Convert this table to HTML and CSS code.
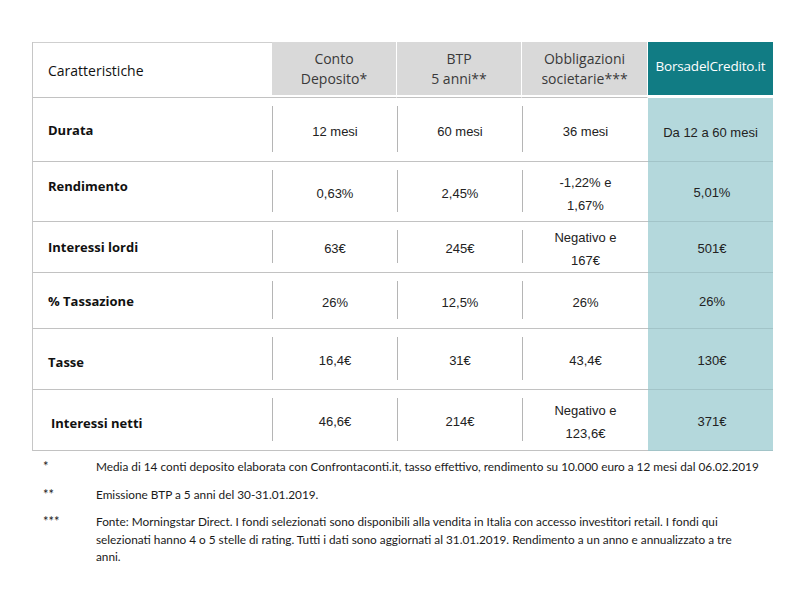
FILE: index.html
```html
<!DOCTYPE html>
<html lang="it">
<head>
<meta charset="utf-8">
<title>Confronto</title>
<link rel="stylesheet" href="styles.css">
</head>
<body>
<div class="page">
  <div class="table">
    <div class="row head">
      <div class="hcell hlabel">Caratteristiche</div>
      <div class="hcell hgray">Conto<br>Deposito*</div>
      <div class="hcell hgray">BTP<br>5 anni**</div>
      <div class="hcell hgray">Obbligazioni<br>societarie***</div>
      <div class="hteal">BorsadelCredito.it</div>
    </div>
    <div class="row r1">
      <div class="lab">Durata</div>
      <div class="cell"><div class="v">12 mesi</div></div>
      <div class="cell"><div class="v">60 mesi</div></div>
      <div class="cell"><div class="v">36 mesi</div></div>
      <div class="tcell up3">Da 12 a 60 mesi</div>
    </div>
    <div class="row r2">
      <div class="lab up">Rendimento</div>
      <div class="cell"><div class="v">0,63%</div></div>
      <div class="cell"><div class="v">2,45%</div></div>
      <div class="cell"><div class="v two">-1,22% e<br>1,67%</div></div>
      <div class="tcell">5,01%</div>
    </div>
    <div class="row r3">
      <div class="lab">Interessi lordi</div>
      <div class="cell"><div class="v">63€</div></div>
      <div class="cell"><div class="v">245€</div></div>
      <div class="cell"><div class="v two">Negativo e<br>167€</div></div>
      <div class="tcell">501€</div>
    </div>
    <div class="row r4">
      <div class="lab">% Tassazione</div>
      <div class="cell"><div class="v">26%</div></div>
      <div class="cell"><div class="v">12,5%</div></div>
      <div class="cell"><div class="v">26%</div></div>
      <div class="tcell">26%</div>
    </div>
    <div class="row r5">
      <div class="lab down">Tasse</div>
      <div class="cell"><div class="v">16,4€</div></div>
      <div class="cell"><div class="v">31€</div></div>
      <div class="cell"><div class="v">43,4€</div></div>
      <div class="tcell">130€</div>
    </div>
    <div class="row r6">
      <div class="lab down in">Interessi netti</div>
      <div class="cell"><div class="v">46,6€</div></div>
      <div class="cell"><div class="v">214€</div></div>
      <div class="cell"><div class="v two">Negativo e<br>123,6€</div></div>
      <div class="tcell">371€</div>
    </div>
  </div>
  <div class="notes">
    <div class="note"><span class="mark">*</span><p>Media di 14 conti deposito elaborata con Confrontaconti.it, tasso effettivo, rendimento su 10.000 euro a 12 mesi dal 06.02.2019</p></div>
    <div class="note"><span class="mark">**</span><p>Emissione BTP a 5 anni del 30-31.01.2019.</p></div>
    <div class="note"><span class="mark">***</span><p>Fonte: Morningstar Direct. I fondi selezionati sono disponibili alla vendita in Italia con accesso investitori retail. I fondi qui<br>selezionati hanno 4 o 5 stelle di rating. Tutti i dati sono aggiornati al 31.01.2019. Rendimento a un anno e annualizzato a tre<br>anni.</p></div>
  </div>
</div>
</body>
</html>
```
FILE: styles.css
```css
* { box-sizing: border-box; }
html, body { margin: 0; padding: 0; background: #fff; }
body { font-family: "Liberation Sans", Arial, sans-serif; color: #222; }

.page { padding: 42px 0 0 32px; }

.table {
  width: 741px;
  border-left: 1px solid #c6c6c6;
}

.row {
  display: grid;
  grid-template-columns: 239px 125px 125px 126px 125px;
  grid-template-rows: 100%;
}

/* header */
.head { height: 56px; }
.hcell {
  height: 56px;
  border-bottom: 1px solid #c2c2c2;
  padding-bottom: 2px;
}
.hlabel {
  border-top: 1px solid #cfcfcf;
  display: flex;
  align-items: center;
  padding-left: 15px;
  padding-top: 2px;
  font-family: "Open Sans", "Noto Sans", sans-serif;
  font-size: 14px;
  color: #111;
}
.hgray {
  background: #d9d9d9;
  background-clip: content-box;
  border-right: 1px solid #fff;
  display: flex;
  align-items: center;
  justify-content: center;
  text-align: center;
  font-family: "Open Sans", "Noto Sans", sans-serif;
  font-size: 14px;
  line-height: 20px;
  color: #3a3a3a;
}
.hteal {
  height: 53px;
  background: #117c84;
  color: #fff;
  display: flex;
  align-items: center;
  justify-content: center;
  padding-bottom: 5px;
  font-family: "Open Sans", "Noto Sans", sans-serif;
  font-size: 13.5px;
  letter-spacing: -0.2px;
}

/* body rows */
.r1 { height: 64px; }
.r2 { height: 60px; }
.r3 { height: 51px; }
.r4 { height: 56px; }
.r5 { height: 61px; }
.r6 { height: 61px; }

.row > .lab, .row > .cell, .row > .tcell {
  border-bottom: 1px solid #c2c2c2;
  min-height: 0;
}

.lab {
  display: flex;
  align-items: center;
  padding-left: 15px;
  font-family: "Open Sans", "Noto Sans", sans-serif;
  font-weight: 700;
  font-size: 13px;
  color: #111;
}
.lab.up { padding-bottom: 12px; }
.lab.down { padding-top: 5px; }
.lab.in { padding-left: 18px; }

.cell {
  display: flex;
  padding: 8px 0 9px;
}
.v {
  flex: 1;
  min-height: 0;
  border-left: 1px solid #b5b5b5;
  display: flex;
  align-items: center;
  justify-content: center;
  text-align: center;
  padding-top: 4px;
  font-size: 13px;
  line-height: 23px;
}
.v.two { padding-top: 5px; }

.row > .tcell {
  background: #b4d8dc;
  border-bottom-color: #a2c4c8;
  display: flex;
  align-items: center;
  justify-content: center;
  padding-top: 2px;
  padding-left: 3px;
  font-size: 13px;
}
.row > .tcell.up3 { padding-top: 6px; padding-left: 0; }

/* notes */
.notes {
  margin: 7px 0 0 11px;
  display: flex;
  flex-direction: column;
  gap: 10px;
  font-family: "Lato", "Open Sans", sans-serif;
  font-size: 11.8px;
  line-height: 17.5px;
  color: #1a1a1a;
}
.note {
  display: grid;
  grid-template-columns: 53px 690px;
}
.mark { font-size: 13px; }
.note p { margin: 0; }
```
